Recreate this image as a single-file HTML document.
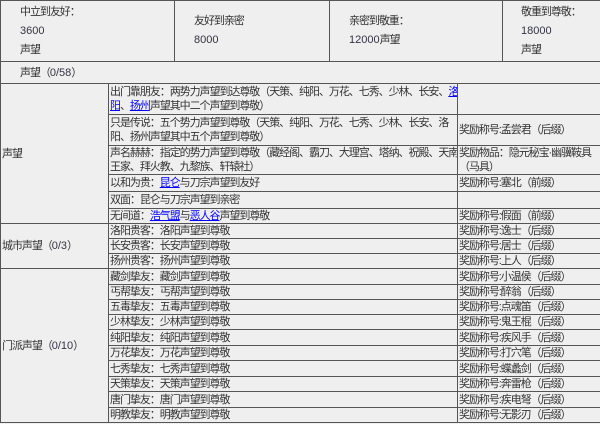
<!DOCTYPE html>
<html><head><meta charset="utf-8"><style>
body{margin:0;background:#efefef;font-family:"Liberation Sans","Noto Sans CJK SC",sans-serif;font-size:11px;letter-spacing:-1.05px;color:#333;width:600px;height:424px;overflow:hidden;position:relative}
table{border-collapse:collapse;position:absolute;left:0;table-layout:fixed}
td{border:1px solid #555;padding:0 0 0 1px;line-height:14px;vertical-align:middle;overflow:hidden;white-space:nowrap}
.n{color:#334;letter-spacing:0}
a{color:#00f;text-decoration:underline}
#t1{top:0;width:601px;height:62px}
#t1 td{line-height:19px}
#t2{top:61px;width:601px}
#t3{top:83px;width:601px}
</style></head><body>
<table id="t1"><tr style="height:61px">
<td style="width:154px;padding-left:19px">中立到友好：<br><span class="n">3600</span><br>声望</td>
<td style="width:135px;padding-left:19px">友好到亲密<br><span class="n">8000</span></td>
<td style="width:153px;padding-left:19px">亲密到敬重：<br><span class="n">12000</span>声望</td>
<td style="padding-left:18px">敬重到尊敬：<br><span class="n">18000</span><br>声望</td>
</tr></table>
<table id="t2"><tr style="height:22px"><td style="padding-left:19px">声望（<span class="n">0/58</span>）</td></tr></table>
<table id="t3">
<colgroup><col style="width:108px"><col style="width:349px"><col></colgroup>
<tr style="height:31px"><td rowspan="6">声望</td><td>出门靠朋友：两势力声望到达尊敬（天策、纯阳、万花、七秀、少林、长安、<a>洛</a><br><a>阳</a>、<a>扬州</a>声望其中二个声望到尊敬）</td><td></td></tr>
<tr style="height:31px"><td>只是传说：五个势力声望到尊敬（天策、纯阳、万花、七秀、少林、长安、洛<br>阳、扬州声望其中五个声望到尊敬）</td><td>奖励称号:孟尝君（后缀）</td></tr>
<tr style="height:29px"><td>声名赫赫：指定的势力声望到尊敬（藏经阁、霸刀、大理宫、塔纳、祝殿、天南<br>王家、拜火教、九黎族、轩辕社）</td><td>奖励物品：隐元秘宝·幽骥鞍具<br>（马具）</td></tr>
<tr style="height:17px"><td>以和为贵：<a>昆仑</a>与刀宗声望到友好</td><td>奖励称号:塞北（前缀）</td></tr>
<tr style="height:17px"><td>双面：昆仑与刀宗声望到亲密</td><td></td></tr>
<tr style="height:15px"><td>无间道：<a>浩气盟</a>与<a>恶人谷</a>声望到尊敬</td><td>奖励称号:假面（前缀）</td></tr>
<tr style="height:15px"><td rowspan="3">城市声望（<span class="n">0/3</span>）</td><td>洛阳贵客：洛阳声望到尊敬</td><td>奖励称号:逸士（后缀）</td></tr>
<tr style="height:15px"><td>长安贵客：长安声望到尊敬</td><td>奖励称号:居士（后缀）</td></tr>
<tr style="height:15px"><td>扬州贵客：扬州声望到尊敬</td><td>奖励称号:上人（后缀）</td></tr>
<tr style="height:16px"><td rowspan="10">门派声望（<span class="n">0/10</span>）</td><td>藏剑挚友：藏剑声望到尊敬</td><td>奖励称号:小温侯（后缀）</td></tr>
<tr style="height:15px"><td>丐帮挚友：丐帮声望到尊敬</td><td>奖励称号:醉翁（后缀）</td></tr>
<tr style="height:15px"><td>五毒挚友：五毒声望到尊敬</td><td>奖励称号:点魂笛（后缀）</td></tr>
<tr style="height:15px"><td>少林挚友：少林声望到尊敬</td><td>奖励称号:鬼王棍（后缀）</td></tr>
<tr style="height:16px"><td>纯阳挚友：纯阳声望到尊敬</td><td>奖励称号:疾风手（后缀）</td></tr>
<tr style="height:15px"><td>万花挚友：万花声望到尊敬</td><td>奖励称号:打穴笔（后缀）</td></tr>
<tr style="height:16px"><td>七秀挚友：七秀声望到尊敬</td><td>奖励称号:蝶蠡剑（后缀）</td></tr>
<tr style="height:15px"><td>天策挚友：天策声望到尊敬</td><td>奖励称号:奔雷枪（后缀）</td></tr>
<tr style="height:16px"><td>唐门挚友：唐门声望到尊敬</td><td>奖励称号:疾电弩（后缀）</td></tr>
<tr style="height:15px"><td>明教挚友：明教声望到尊敬</td><td>奖励称号:无影刃（后缀）</td></tr>
</table>
</body></html>
